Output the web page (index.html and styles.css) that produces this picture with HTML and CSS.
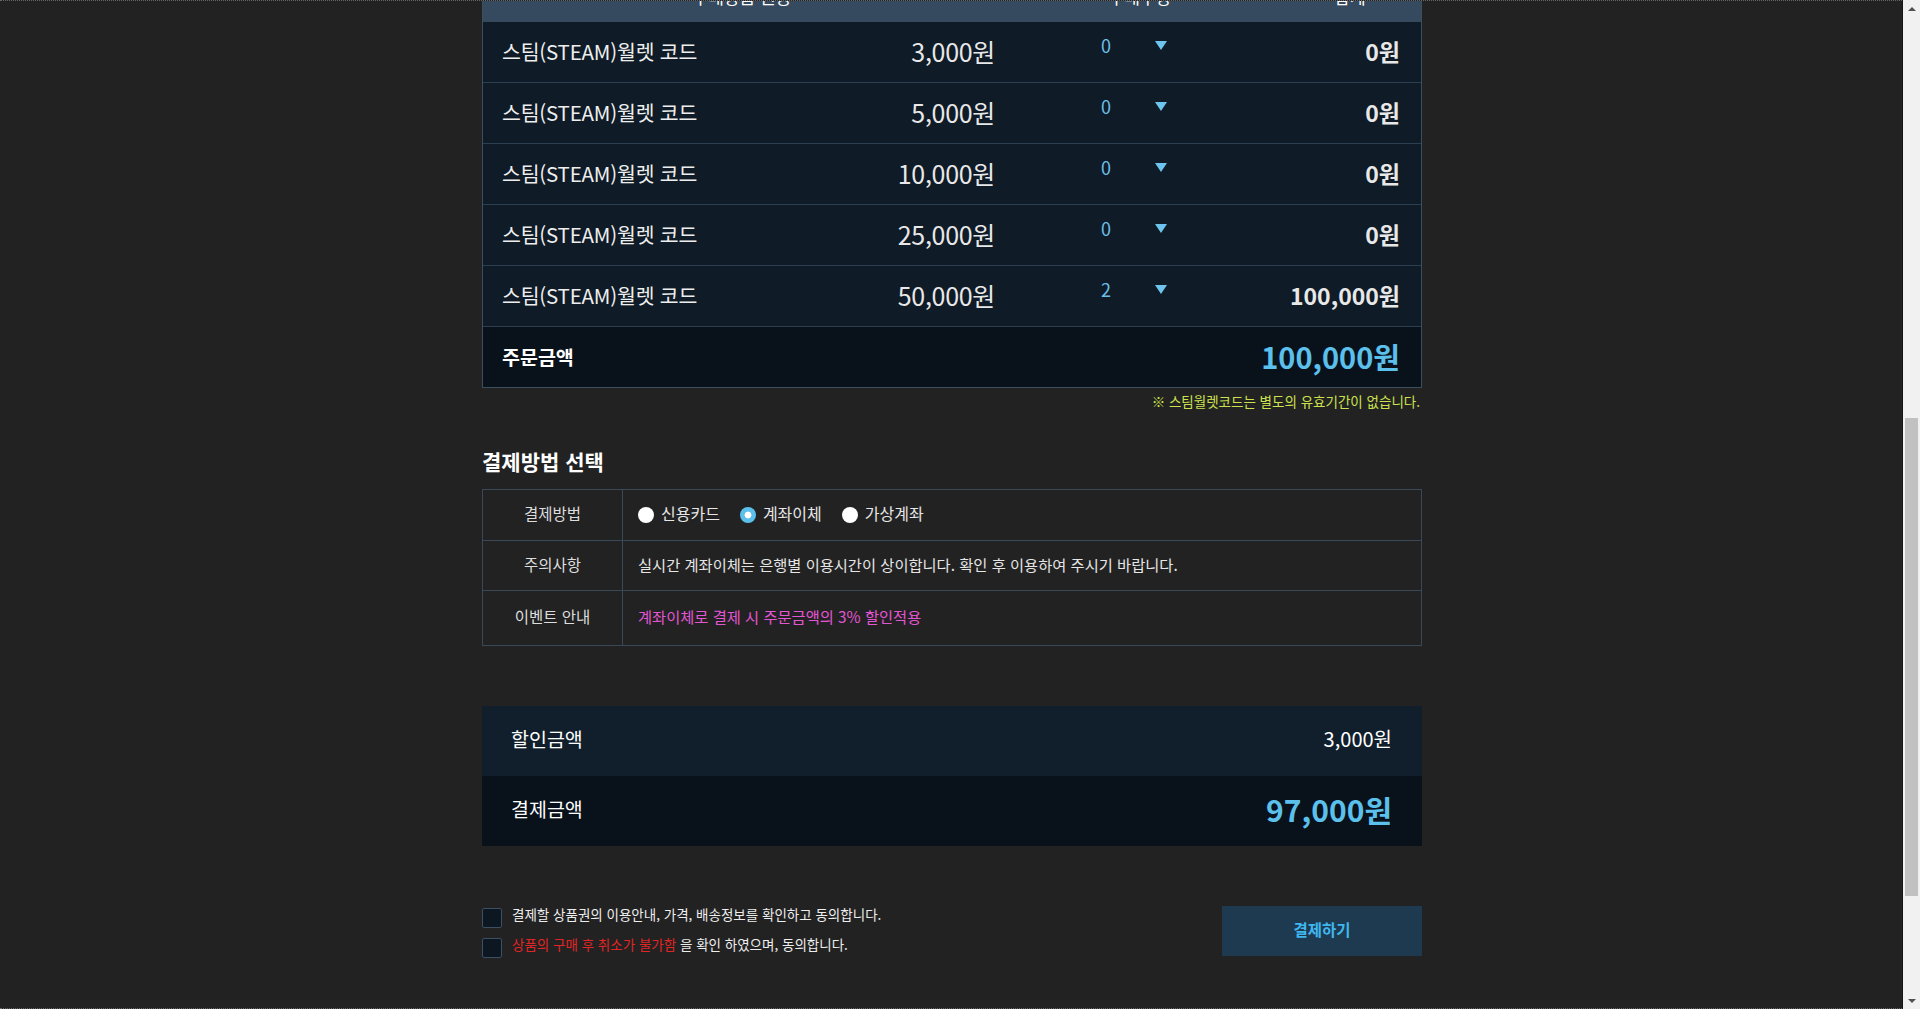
FILE: index.html
```html
<!DOCTYPE html>
<html lang="ko">
<head>
<meta charset="utf-8">
<title>결제</title>
<link rel="stylesheet" href="styles.css">
</head>
<body>
<div class="window">
  <main class="page">
    <div class="content">
      <section class="items">
        <div class="items-head">
          <span>구매상품 권종</span>
          <span>구매수량</span>
          <span>합계</span>
        </div>
        <div class="item-row">
          <span class="name">스팀(STEAM)월렛 코드</span>
          <span class="price">3,000원</span>
          <span class="qty"><span>0</span><span class="arrow"></span></span>
          <span class="sum">0원</span>
        </div>
        <div class="item-row">
          <span class="name">스팀(STEAM)월렛 코드</span>
          <span class="price">5,000원</span>
          <span class="qty"><span>0</span><span class="arrow"></span></span>
          <span class="sum">0원</span>
        </div>
        <div class="item-row">
          <span class="name">스팀(STEAM)월렛 코드</span>
          <span class="price">10,000원</span>
          <span class="qty"><span>0</span><span class="arrow"></span></span>
          <span class="sum">0원</span>
        </div>
        <div class="item-row">
          <span class="name">스팀(STEAM)월렛 코드</span>
          <span class="price">25,000원</span>
          <span class="qty"><span>0</span><span class="arrow"></span></span>
          <span class="sum">0원</span>
        </div>
        <div class="item-row">
          <span class="name">스팀(STEAM)월렛 코드</span>
          <span class="price">50,000원</span>
          <span class="qty"><span>2</span><span class="arrow"></span></span>
          <span class="sum">100,000원</span>
        </div>
        <div class="total-row">
          <span class="total-label">주문금액</span>
          <span class="total-value">100,000원</span>
        </div>
      </section>

      <p class="note">※ 스팀월렛코드는 별도의 유효기간이 없습니다.</p>

      <h2 class="section-title">결제방법 선택</h2>

      <div class="pay-table">
        <div class="pay-row pay-row-1">
          <div class="pay-label">결제방법</div>
          <div class="pay-value">
            <span class="radio-item"><span class="radio"></span>신용카드</span>
            <span class="radio-item"><span class="radio radio-on"></span>계좌이체</span>
            <span class="radio-item"><span class="radio"></span>가상계좌</span>
          </div>
        </div>
        <div class="pay-row pay-row-2">
          <div class="pay-label">주의사항</div>
          <div class="pay-value">실시간 계좌이체는 은행별 이용시간이 상이합니다. 확인 후 이용하여 주시기 바랍니다.</div>
        </div>
        <div class="pay-row pay-row-3">
          <div class="pay-label">이벤트 안내</div>
          <div class="pay-value event">계좌이체로 결제 시 주문금액의 3% 할인적용</div>
        </div>
      </div>

      <div class="summary">
        <div class="sum-row discount">
          <span>할인금액</span>
          <span class="discount-value">3,000원</span>
        </div>
        <div class="sum-row final">
          <span>결제금액</span>
          <span class="final-value">97,000원</span>
        </div>
      </div>

      <div class="agree">
        <div class="checks">
          <label class="check-row"><span class="checkbox"></span><span class="check-text">결제할 상품권의 이용안내, 가격, 배송정보를 확인하고 동의합니다.</span></label>
          <label class="check-row"><span class="checkbox"></span><span class="check-text"><span class="warn">상품의 구매 후 취소가 불가함</span> 을 확인 하였으며, 동의합니다.</span></label>
        </div>
        <button class="pay-btn" type="button">결제하기</button>
      </div>
    </div>
  </main>
  <div class="scrollbar">
    <div class="sb-btn"><span class="sb-up"></span></div>
    <div class="sb-gap"></div>
    <div class="sb-thumb"></div>
    <div class="sb-fill"></div>
    <div class="sb-btn"><span class="sb-down"></span></div>
  </div>
</div>
</body>
</html>
```

FILE: styles.css
```css
html, body {
  margin: 0;
  padding: 0;
}

body {
  background: #222222;
  font-family: "Noto Sans CJK KR", "Noto Sans", sans-serif;
  color: #e6e6e6;
}

.window {
  display: flex;
  height: 1009px;
  overflow: hidden;
}

.page {
  flex: 1;
  box-sizing: border-box;
  padding-left: 2px;
  border-top: 1px dotted #666;
  border-bottom: 1px dotted #666;
  overflow: hidden;
}

.content {
  width: 940px;
  margin: 0 auto;
}

/* ---------- items table ---------- */
.items {
  margin-top: -31px;
  border: 1px solid #3b4d5f;
  border-top: 0;
  background: #0f1b26;
}

.items-head {
  display: grid;
  grid-template-columns: 518px 278px 1fr;
  height: 52px;
  align-items: center;
  text-align: center;
  background: #354a5e;
  color: #ffffff;
  font-size: 17px;
}

.item-row {
  display: grid;
  grid-template-columns: 317px 195px 205px 1fr;
  box-sizing: border-box;
  height: 61px;
  padding-bottom: 2px;
  align-items: center;
  border-bottom: 1px solid #2d4052;
}

.name {
  padding-left: 19px;
  font-size: 20.5px;
  letter-spacing: -0.2px;
  color: #eeeeee;
}

.price {
  text-align: right;
  font-size: 25px;
  letter-spacing: -0.3px;
  color: #e8e8e8;
}

.qty {
  align-self: start;
  justify-self: start;
  margin: 13px 0 0 106px;
  width: 66px;
  display: flex;
  justify-content: space-between;
  align-items: center;
  font-size: 18px;
  line-height: 20px;
  color: #6bbfe8;
}

.arrow {
  width: 0;
  height: 0;
  border-left: 6px solid transparent;
  border-right: 6px solid transparent;
  border-top: 9px solid #6cc4ef;
}

.sum {
  text-align: right;
  padding-right: 21px;
  font-size: 23px;
  font-weight: bold;
  color: #e8e8e8;
}

.total-row {
  display: flex;
  justify-content: space-between;
  align-items: center;
  box-sizing: border-box;
  height: 60px;
  padding: 0 21px 2px 19px;
  background: #09121b;
}

.total-label {
  font-size: 19.5px;
  font-weight: bold;
  color: #ffffff;
}

.total-value {
  font-size: 29px;
  font-weight: bold;
  color: #5bc0eb;
}

.note {
  margin: 4px 0 0;
  padding-right: 2px;
  text-align: right;
  font-size: 13.5px;
  line-height: 18px;
  color: #cde24e;
}

.section-title {
  margin: 37px 0 0;
  font-size: 21px;
  line-height: 28px;
  font-weight: bold;
  color: #ffffff;
}

/* ---------- payment table ---------- */
.pay-table {
  margin-top: 14px;
  border: 1px solid #3a4958;
}

.pay-row {
  display: grid;
  grid-template-columns: 140px 1fr;
  border-bottom: 1px solid #3a4958;
}

.pay-row-1 { height: 50px; }
.pay-row-2 { height: 49px; }
.pay-row-3 { height: 54px; border-bottom: 0; }

.pay-label {
  display: flex;
  align-items: center;
  justify-content: center;
  padding-bottom: 4px;
  border-right: 1px solid #3a4958;
  font-size: 15.5px;
  color: #dddddd;
}

.pay-value {
  display: flex;
  align-items: center;
  padding-left: 15px;
  padding-bottom: 4px;
  font-size: 15.3px;
  color: #e6e6e6;
}

.event {
  color: #e256d4;
}

.radio-item {
  display: inline-flex;
  align-items: center;
  gap: 7px;
  margin-right: 20px;
  font-size: 16px;
}

.radio {
  width: 16px;
  height: 16px;
  margin-top: 4px;
  border-radius: 50%;
  background: #ffffff;
}

.radio-on {
  background: radial-gradient(circle, #ffffff 0 3px, #5bc0eb 3.8px);
}

/* ---------- summary ---------- */
.summary {
  margin-top: 60px;
}

.sum-row {
  display: flex;
  justify-content: space-between;
  align-items: center;
  box-sizing: border-box;
  height: 70px;
  padding: 0 30px 5px 29px;
  font-size: 19.5px;
  color: #ffffff;
}

.discount {
  background: #111f2d;
}

.discount-value {
  font-size: 20px;
}

.final {
  background: #09111a;
}

.final-value {
  font-size: 30px;
  font-weight: bold;
  color: #5bc0eb;
}

/* ---------- agreement ---------- */
.agree {
  margin-top: 60px;
  display: flex;
  justify-content: space-between;
  align-items: flex-start;
}

.checks {
  display: flex;
  flex-direction: column;
  gap: 10px;
  padding-top: 2px;
}

.check-row {
  display: flex;
  align-items: center;
  gap: 10px;
  font-size: 13.5px;
  color: #eeeeee;
}

.check-text {
  margin-top: -8px;
}

.checkbox {
  width: 20px;
  height: 20px;
  box-sizing: border-box;
  border: 1px solid #3c4f63;
  border-radius: 2px;
  background: #0c1722;
}

.warn {
  color: #e02525;
}

.pay-btn {
  width: 200px;
  height: 50px;
  padding: 0 0 4px;
  border: 0;
  background: #1e3a50;
  color: #3fb7ee;
  font-family: "Noto Sans CJK KR", sans-serif;
  font-size: 15.5px;
  font-weight: bold;
}

/* ---------- scrollbar ---------- */
.scrollbar {
  width: 17px;
  border-left: 1px solid #151515;
  background: #f1f1f1;
  display: flex;
  flex-direction: column;
  align-items: center;
}

.sb-btn {
  width: 17px;
  height: 17px;
  display: flex;
  align-items: center;
  justify-content: center;
}

.sb-up {
  border-left: 4px solid transparent;
  border-right: 4px solid transparent;
  border-bottom: 4px solid #505050;
}

.sb-down {
  border-left: 4px solid transparent;
  border-right: 4px solid transparent;
  border-top: 4px solid #505050;
}

.sb-gap {
  height: 401px;
}

.sb-thumb {
  width: 13px;
  height: 478px;
  background: #c1c1c1;
}

.sb-fill {
  flex: 1;
}
```
